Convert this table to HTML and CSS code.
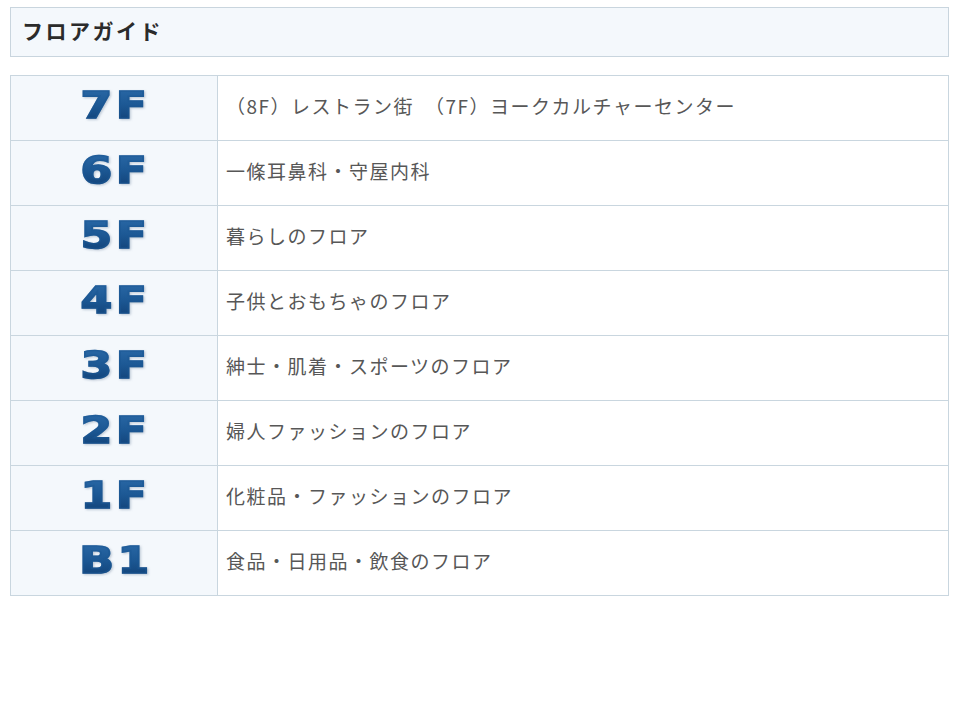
FILE: index.html
```html
<!DOCTYPE html>
<html lang="ja">
<head>
<meta charset="utf-8">
<title>フロアガイド</title>
<link rel="stylesheet" href="styles.css">
</head>
<body>
<div class="page">
  <h2 class="title">フロアガイド</h2>
  <table class="floors">
    <tr><th><span class="fl">7F</span></th><td>（8F）レストラン街　（7F）ヨークカルチャーセンター</td></tr>
    <tr><th><span class="fl">6F</span></th><td>一條耳鼻科・守屋内科</td></tr>
    <tr><th><span class="fl">5F</span></th><td>暮らしのフロア</td></tr>
    <tr><th><span class="fl">4F</span></th><td>子供とおもちゃのフロア</td></tr>
    <tr><th><span class="fl">3F</span></th><td>紳士・肌着・スポーツのフロア</td></tr>
    <tr><th><span class="fl">2F</span></th><td>婦人ファッションのフロア</td></tr>
    <tr><th><span class="fl">1F</span></th><td>化粧品・ファッションのフロア</td></tr>
    <tr><th><span class="fl">B1</span></th><td>食品・日用品・飲食のフロア</td></tr>
  </table>
</div>
</body>
</html>
```
FILE: styles.css
```css
html, body {
  margin: 0;
  padding: 0;
  background: #ffffff;
}
.page {
  padding: 7px 11px 0 10px;
  font-family: "Noto Sans CJK JP", "Noto Sans", sans-serif;
}
.title {
  margin: 0;
  height: 48px;
  box-sizing: border-box;
  height: 50px;
  border: 1px solid #c9d5de;
  background: #f4f8fc;
  display: flex;
  align-items: center;
  padding: 0 11px 5px;
  font-size: 21px;
  font-weight: 700;
  letter-spacing: 2.5px;
  color: #2b2b2b;
}
.floors {
  margin-top: 18px;
  width: 100%;
  border-collapse: collapse;
}
.floors th, .floors td {
  border: 1px solid #c9d6df;
  height: 65px;
  padding: 0;
  box-sizing: border-box;
}
.floors th {
  width: 207px;
  background: #f4f8fc;
  text-align: center;
}
.floors td {
  background: #ffffff;
  padding: 0 0 5px 8px;
  font-size: 19px;
  letter-spacing: 1.5px;
  color: #575757;
  font-weight: 400;
}
.fl {
  display: inline-block;
  position: relative;
  top: -3px;
  font-family: "DejaVu Sans", sans-serif;
  font-weight: 700;
  font-size: 38px;
  line-height: 1;
  letter-spacing: 3px;
  padding-left: 3px;
  transform: scaleX(1.2);
  background: linear-gradient(180deg, #2b6aa8 0%, #1c5894 50%, #103f74 100%);
  -webkit-background-clip: text;
  background-clip: text;
  color: transparent;
  -webkit-text-stroke: 1.6px rgba(28, 88, 148, 0.55);
  filter: drop-shadow(1px 1px 1px rgba(20, 50, 90, 0.25));
}
```
